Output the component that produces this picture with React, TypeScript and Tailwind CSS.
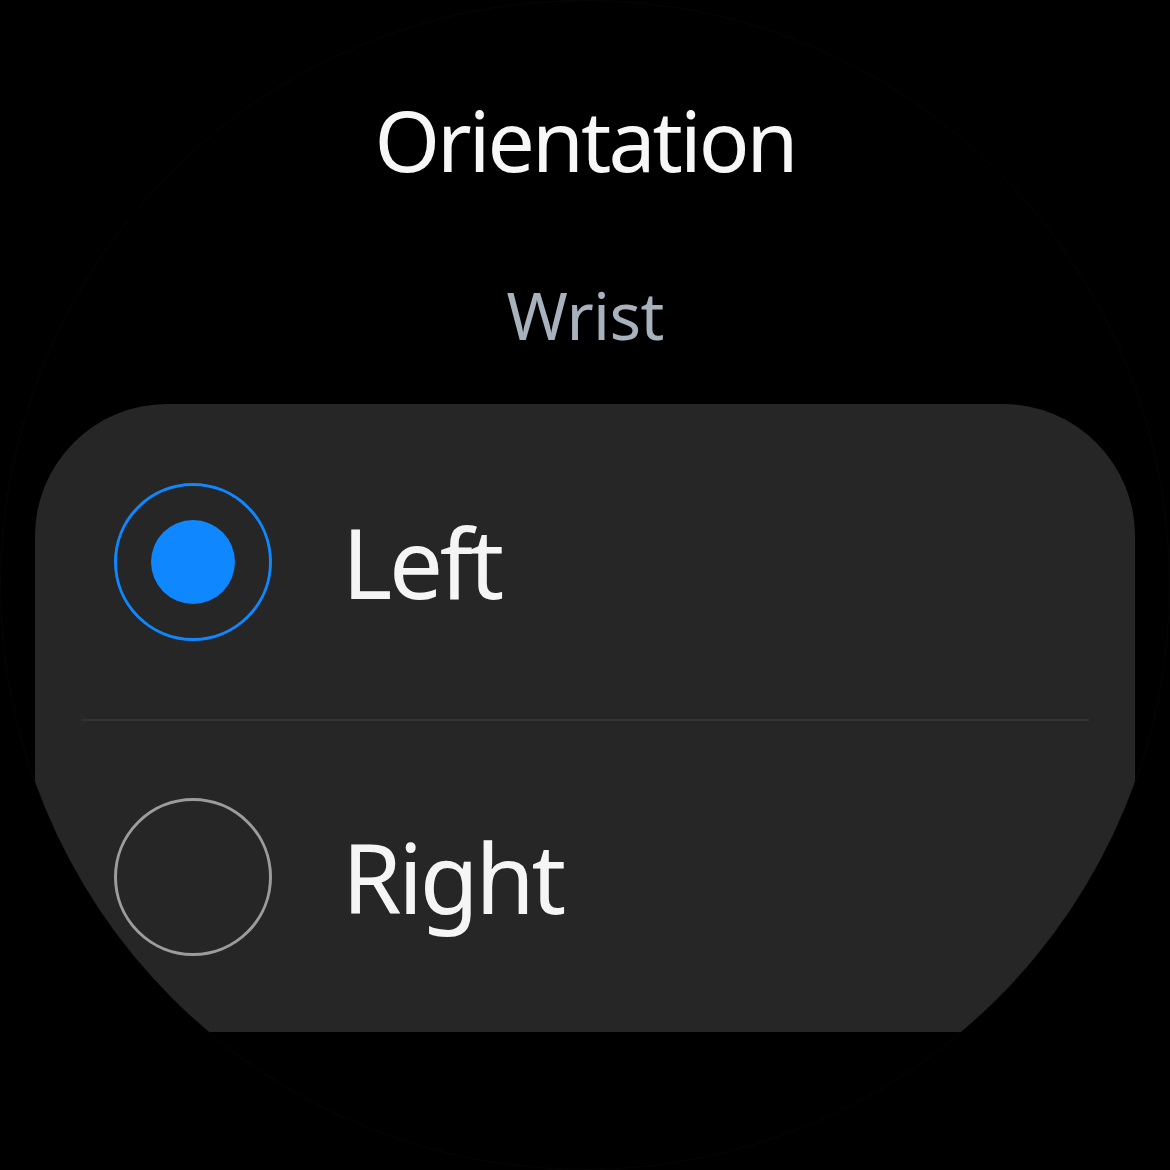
import React, { useState } from "react";

const FONT = "font-['Noto_Sans',_'Open_Sans',_sans-serif]";

type Option = { id: string; label: string };

const OPTIONS: Option[] = [
  { id: "left", label: "Left" },
  { id: "right", label: "Right" },
];

function Radio({ checked }: { checked: boolean }) {
  return (
    <span
      className={
        checked
          ? "flex h-[158px] w-[158px] shrink-0 items-center justify-center rounded-full border-[3px] border-[#0f87ff]"
          : "flex h-[158px] w-[158px] shrink-0 items-center justify-center rounded-full border-[3px] border-[#9c9c9c]"
      }
    >
      {checked && <span className="h-[84px] w-[84px] rounded-full bg-[#0f87ff]" />}
    </span>
  );
}

export default function App() {
  const [selected, setSelected] = useState("left");

  return (
    <div className={`h-[1170px] w-[1170px] bg-black ${FONT}`}>
      <div className="flex h-[1170px] w-[1170px] flex-col items-center overflow-hidden rounded-full border border-[#060606] bg-black">
        <h1 className="mt-[97px] text-[84px] leading-none tracking-[-0.035em] text-[#f7f7f7]">
          Orientation
        </h1>
        <p className="mt-[99px] text-[66px] leading-none tracking-[-0.01em] text-[#a8b2bc]">Wrist</p>

        <div className="mt-[57px] flex h-[628px] w-[1100px] shrink-0 flex-col rounded-t-[132px] bg-[#262626]">
          {OPTIONS.map((opt, i) => (
            <React.Fragment key={opt.id}>
              {i > 0 && <div className="mx-[46px] h-[2px] shrink-0 bg-[#333333]" />}
              <button
                onClick={() => setSelected(opt.id)}
                className={
                  i === 0
                    ? "flex h-[315px] shrink-0 items-center gap-[70px] pl-[79px] text-left"
                    : "flex h-[311px] shrink-0 items-center gap-[70px] pl-[79px] text-left"
                }
              >
                <Radio checked={selected === opt.id} />
                <span className="text-[96px] leading-none tracking-[-0.035em] text-[#f5f5f5]">
                  {opt.label}
                </span>
              </button>
            </React.Fragment>
          ))}
        </div>
      </div>
    </div>
  );
}
